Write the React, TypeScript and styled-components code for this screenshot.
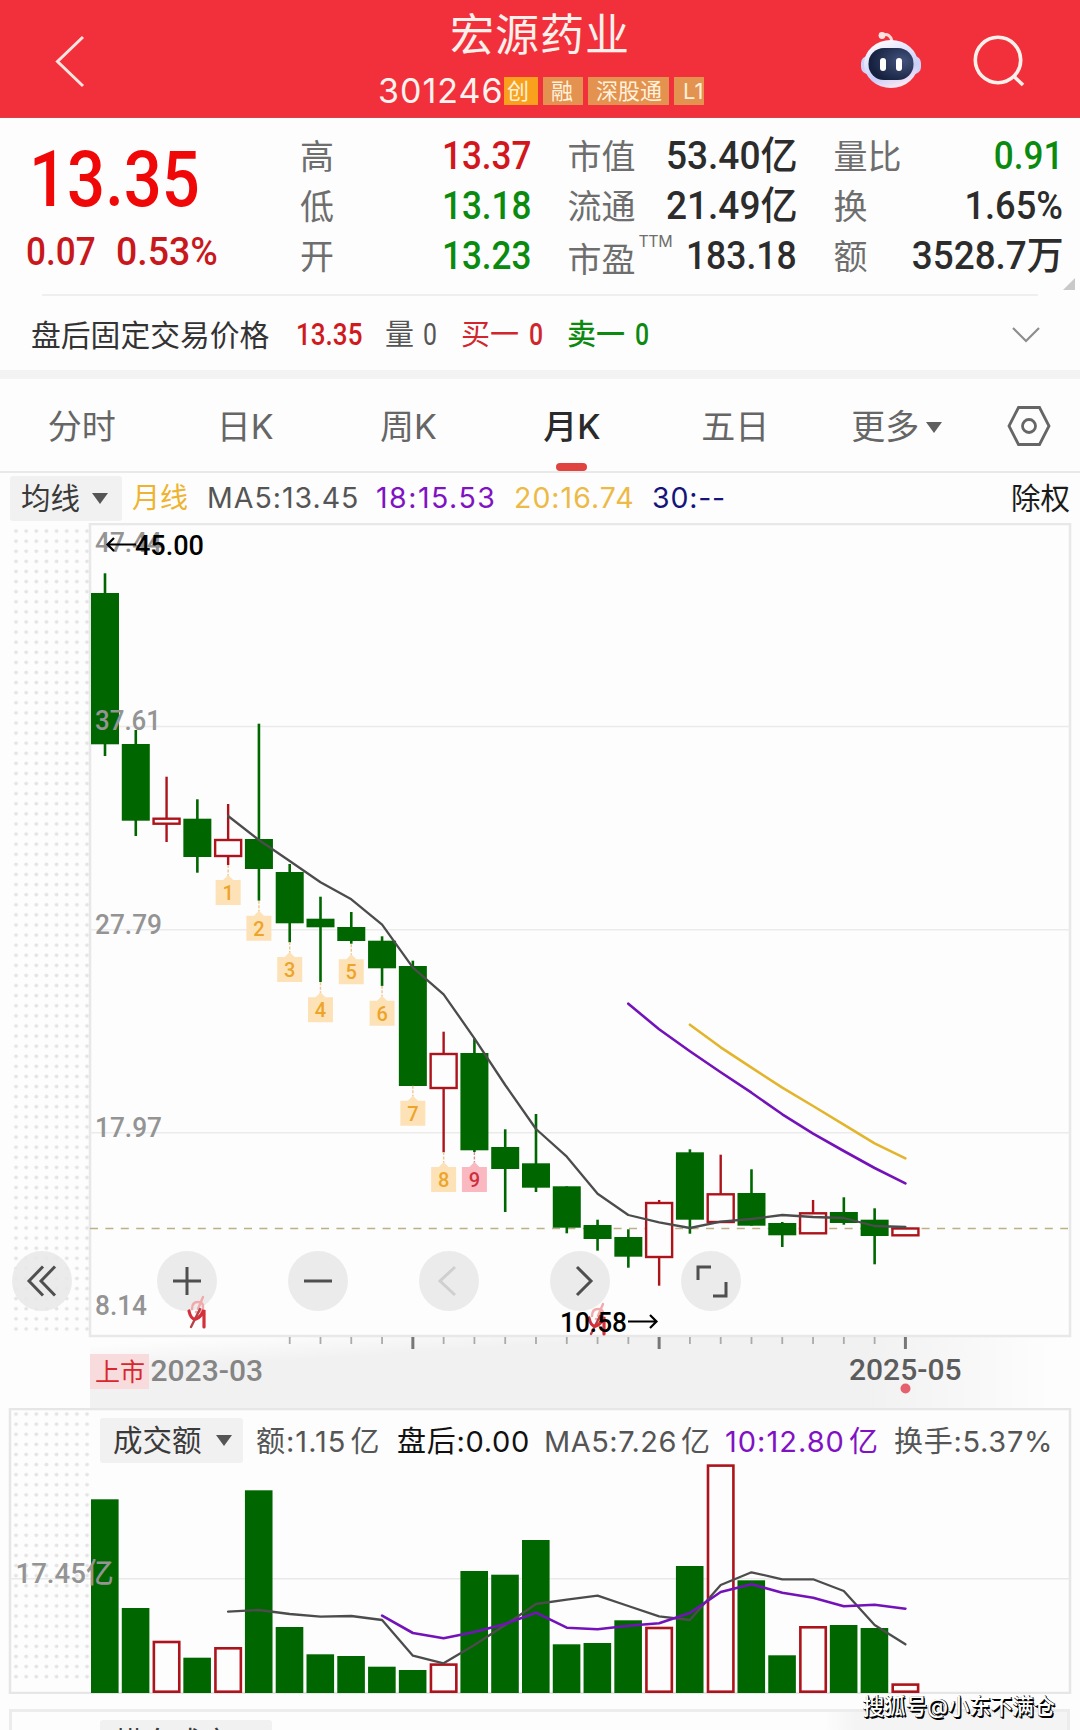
import React from "react";
import styled, { createGlobalStyle } from "styled-components";

const DIN = `Roboto, "Noto Sans CJK SC", sans-serif`;
const UI = `Inter, "Noto Sans CJK SC", sans-serif`;
const GREEN = "#006600";
const RED = "#ad131b";

const Global = createGlobalStyle`
  * { box-sizing: border-box; }
  body { margin: 0; background: #fdfdfd; font-family: ${UI}; color: #333; }
`;

const Page = styled.div`
  width: 1080px;
  height: 1730px;
  overflow: hidden;
  background: #fdfdfd;
  display: flex;
  flex-direction: column;
  white-space: nowrap;
`;

/* ---------- shared text pieces ---------- */
const Num = styled.span<{ $s: number; $k?: number; $c?: string; $o?: string; $b?: number }>`
  display: inline-block;
  flex: none;
  font: ${(p) => p.$b ?? 500} ${(p) => p.$s}px/1 ${DIN};
  color: ${(p) => p.$c ?? "#2c2c2c"};
  transform: scaleX(${(p) => p.$k ?? 0.9});
  transform-origin: ${(p) => p.$o ?? "left"} center;
`;

const Slot = styled.div<{ $w: number; $s?: number; $c?: string; $b?: number; $ls?: number; $in?: number }>`
  flex: none;
  width: ${(p) => p.$w}px;
  height: 44px;
  padding-left: ${(p) => p.$in ?? 0}px;
  font-size: ${(p) => p.$s ?? 29}px;
  line-height: 44px;
  font-weight: ${(p) => p.$b ?? 400};
  letter-spacing: ${(p) => p.$ls ?? 0}px;
  color: ${(p) => p.$c ?? "#555"};
`;
const Unit = styled.span`
  margin-left: 4px;
`;

/* ---------- header ---------- */
const Header = styled.header`
  flex: none;
  height: 118px;
  background: #f1303b;
  border-bottom: 1px solid #d9444c;
  display: grid;
  grid-template-columns: 378px 326px 1fr;
`;
const BackBox = styled.div`
  padding: 34px 0 0 52px;
`;
const TitleBox = styled.div`
  display: flex;
  flex-direction: column;
`;
const Title = styled.h1`
  margin: 5px 0 0 72px;
  font-size: 44px;
  line-height: 60px;
  letter-spacing: 1px;
  font-weight: 400;
  color: #fff0ec;
`;
const CodeRow = styled.div`
  display: flex;
  align-items: center;
  height: 28px;
  margin-top: 12px;
  overflow: hidden;
`;
const Code = styled.span`
  flex: none;
  width: 126px;
  font-size: 34px;
  line-height: 28px;
  letter-spacing: 1px;
  color: #fff3ef;
`;
const Tag = styled.span<{ $w: number; $bg?: string; $pad?: number }>`
  flex: none;
  width: ${(p) => p.$w}px;
  height: 28px;
  margin-right: 5px;
  padding-left: ${(p) => p.$pad ?? 8}px;
  background: ${(p) => p.$bg ?? "#e4924f"};
  color: #fff1dc;
  font-size: 22px;
  line-height: 28px;
`;
const HeadIcons = styled.div`
  display: flex;
  padding: 30px 0 0 156px;
  gap: 44px;
`;

/* ---------- quote ---------- */
const Quote = styled.section`
  flex: none;
  height: 178px;
  display: flex;
  position: relative;
`;
const PriceBox = styled.div`
  width: 300px;
  padding-top: 22px;
`;
const BigPrice = styled.div`
  height: 80px;
  display: flex;
  align-items: center;
  padding-left: 29px;
`;
const Change = styled.div`
  height: 40px;
  margin-top: 12px;
  display: flex;
  align-items: center;
  padding-left: 26px;
`;
const ChangeCell = styled.div`
  width: 90px;
`;
const Stats = styled.div`
  padding-top: 14px;
  display: grid;
  grid-template-columns: 231px 229.5px 230px;
  grid-auto-rows: 50.2px;
  column-gap: 36.5px;
`;
const Stat = styled.div`
  display: flex;
  align-items: center;
  justify-content: space-between;
`;
const StatLabel = styled.div<{ $drop?: boolean }>`
  display: flex;
  font-size: 34px;
  line-height: 50px;
  color: #6e6e6e;
  font-weight: 400;
  padding-top: ${(p) => (p.$drop ? 5 : 0)}px;
`;
const Sup = styled.sup`
  font-size: 16px;
  line-height: 16px;
  margin: -2px 0 0 3px;
  letter-spacing: -0.5px;
`;
const Lift = styled.div`
  padding-bottom: 2px;
  line-height: 1;
`;
const Corner = styled.i`
  position: absolute;
  right: 5px;
  top: 160px;
  border-left: 12px solid transparent;
  border-bottom: 12px solid #c9c9c9;
`;

/* ---------- after hours ---------- */
const AfterHours = styled.section`
  flex: none;
  height: 74px;
  display: flex;
  align-items: center;
  padding-left: 31px;
  padding-top: 3px;
`;
const Rule = styled.hr`
  flex: none;
  width: 996px;
  height: 2px;
  margin: -2px 42px 0;
  border: 0;
  background: #efefef;
`;
const Band = styled.div`
  flex: none;
  height: 9px;
  background: #f3f3f3;
`;

/* ---------- tabs ---------- */
const Tabs = styled.nav`
  flex: none;
  height: 94px;
  display: flex;
  border-bottom: 2px solid #e9e9e9;
`;
const Tab = styled.div<{ $on?: boolean }>`
  width: 163.4px;
  display: flex;
  flex-direction: column;
  align-items: center;
  padding-top: 22px;
  font-size: 34px;
  line-height: 52px;
  font-weight: ${(p) => (p.$on ? 500 : 400)};
  color: ${(p) => (p.$on ? "#2a2a2a" : "#666")};
  &::after {
    content: "";
    display: ${(p) => (p.$on ? "block" : "none")};
    width: 31px;
    height: 8px;
    margin-top: 10px;
    border-radius: 4px;
    background: #df4440;
    margin-right: 1px;
  }
`;
const TabInner = styled.span`
  display: flex;
  align-items: center;
  gap: 7px;
  margin-left: -4px;
`;
const Caret = styled.i<{ $c?: string }>`
  display: inline-block;
  border: 8px solid transparent;
  border-top: 11px solid ${(p) => p.$c ?? "#5f5f5f"};
  border-bottom: 0;
`;
const Gear = styled.svg`
  margin: 26px 0 0 27px;
`;

/* ---------- moving averages ---------- */
const MaRow = styled.div`
  flex: none;
  height: 50px;
  display: flex;
  align-items: center;
  padding-left: 10px;
`;
const Picker = styled.div<{ $w: number; $h: number; $pad: number; $gap: number }>`
  flex: none;
  display: flex;
  align-items: center;
  width: ${(p) => p.$w}px;
  height: ${(p) => p.$h}px;
  padding-left: ${(p) => p.$pad}px;
  gap: ${(p) => p.$gap}px;
  background: #f1f1f1;
  border-radius: 3px;
  font-size: 29.5px;
  line-height: 45px;
  color: #3a3a3a;
`;

/* ---------- chart ---------- */
const ChartArea = styled.section`
  flex: none;
  height: 885px;
  position: relative;
`;
const Controls = styled.div`
  position: absolute;
  left: 12px;
  top: 728px;
  display: flex;
`;
const Round = styled.button<{ $mr: number }>`
  flex: none;
  width: 60px;
  height: 60px;
  margin: 0 ${(p) => p.$mr}px 0 0;
  padding: 0;
  border: 0;
  border-radius: 50%;
  background: rgba(232, 232, 232, 0.88);
`;
const Svg = styled.svg`
  display: block;
`;
const Overlay = styled.svg`
  position: absolute;
  left: 0;
  top: 0;
  pointer-events: none;
`;

/* ---------- volume ---------- */
const Volume = styled.section`
  flex: none;
  height: 286px;
  position: relative;
`;
const Legend = styled.div`
  position: absolute;
  left: 100px;
  top: 10px;
  height: 45px;
  display: flex;
  align-items: center;
  ${Slot} {
    margin-top: 3px;
  }
`;
const NextPanel = styled.section`
  flex: none;
  height: 60px;
  margin: 15px 10px 0 9px;
  border: 3px solid #ececec;
  display: flex;
  background: linear-gradient(90deg, transparent 77%, #f4f4f4 80%);
  padding: 8px 0 0 88px;
`;
const Watermark = styled.div`
  position: absolute;
  right: 25px;
  top: 285px;
  font-size: 21.4px;
  line-height: 26px;
  font-weight: 500;
  color: #fff;
  text-shadow: 1.5px 1.5px 0 #000, 1px 0 0 #000, 0 1px 0 #222;
`;

/* ---------- data ---------- */
const X0 = 105;
const STEP = 30.785;
const cx = (i: number) => X0 + i * STEP;

/* direction, high, body top, body bottom, low */
type Candle = [number, number, number, number, number];
const candles: Candle[] = [
  [0, 573.3, 593, 744.3, 756], [0, 730, 744, 820.7, 836], [1, 776.7, 817.7, 823.7, 842],
  [0, 799.3, 818.7, 857, 872.7], [1, 804, 839, 856, 865], [0, 723.7, 839, 869, 900.7],
  [0, 864, 872, 923.3, 942.3], [0, 896.7, 918.7, 927.3, 982], [0, 912, 927, 941, 943.7],
  [0, 936.3, 940.7, 968.3, 986], [0, 960.7, 966, 1086, 1086], [1, 1031.7, 1053, 1088, 1152.3],
  [0, 1038.3, 1053, 1150.3, 1152], [0, 1129.3, 1147, 1169, 1212], [0, 1114, 1163.3, 1187.7, 1192],
  [0, 1186.3, 1186.3, 1227.7, 1233.3], [0, 1219.7, 1225, 1239, 1250.7], [0, 1229.3, 1237, 1256.7, 1267.7],
  [1, 1200, 1202, 1257, 1285.7], [0, 1149.3, 1152.3, 1219.7, 1233.7], [1, 1154.7, 1193.3, 1222, 1222],
  [0, 1169.3, 1193, 1225.7, 1225.7], [0, 1222, 1223, 1235.3, 1247], [1, 1200, 1212.3, 1233.3, 1233.3],
  [0, 1197.3, 1212, 1223, 1224.7], [0, 1208.3, 1219.7, 1236, 1264.3], [1, 1228, 1227.5, 1235.3, 1235],
];
const ma5 = [816, 840, 861, 882.3, 899.3, 924.7, 967.7, 994.3, 1038.3, 1085, 1129, 1156.7, 1193.7, 1215, 1222.3, 1228, 1221.7, 1219, 1215, 1217, 1218, 1226, 1227];
const ma18 = [1003.7, 1029.3, 1051.3, 1072.3, 1092.7, 1114.3, 1133.7, 1151, 1168, 1183.3];
const ma20 = [1024.7, 1047.3, 1067.7, 1087.7, 1106, 1124.7, 1143.3, 1158.3];
const marks = [880, 915.7, 957, 997.3, 959.3, 1000.7, 1100.7, 1167, 1167];
const grid: [string, number, number, number][] = [
  ["47.44", 0, 552, 67], ["37.61", 726.5, 730, 66], ["27.79", 929.7, 933.5, 67], ["17.97", 1132.7, 1137, 67], ["8.14", 0, 1315, 52],
];
const bars = [1499.3, 1608, 1640.7, 1657.7, 1647, 1490.3, 1627, 1654.3, 1656, 1666.7, 1670, 1663.3, 1571, 1574.7, 1540, 1644.3, 1643, 1620.3, 1626.7, 1566, 1464.3, 1580.3, 1655.3, 1626, 1625, 1628, 1683.3];
const vma5 = [1611.7, 1610, 1614, 1616.7, 1616, 1620, 1655.7, 1663.3, 1645, 1625, 1604, 1599.7, 1595.7, 1606, 1616.3, 1620, 1585, 1572.3, 1579.3, 1579.3, 1591, 1625, 1644.3];
const vma10 = [1615.7, 1633, 1638.3, 1632, 1624, 1612.7, 1627.7, 1629.3, 1625.7, 1623.3, 1613, 1592, 1584.3, 1592.7, 1597.7, 1606.3, 1604.7, 1608.7];

const Line = ({ from, ys, color, w = 2.3 }: { from: number; ys: number[]; color: string; w?: number }) => (
  <polyline
    points={ys.map((y, i) => `${cx(from + i).toFixed(1)},${y}`).join(" ")}
    fill="none" stroke={color} strokeWidth={w} strokeLinecap="round" strokeLinejoin="round"
  />
);

const Dots = ({ id, y }: { id: string; y: number }) => (
  <defs>
    <pattern id={id} x="11" y={y} width="10.15" height="10.1" patternUnits="userSpaceOnUse">
      <circle cx="5" cy="5" r="1.9" fill="#e4e4e4" />
    </pattern>
  </defs>
);

const DinText = ({ x, y, w, size = 28.5, fill = "#949494", weight = 500, children }: {
  x: number; y: number; w: number; size?: number; fill?: string; weight?: number; children: string;
}) => (
  <text x={x} y={y} fontFamily={DIN} fontSize={size} fontWeight={weight} fill={fill}
    textLength={w} lengthAdjust="spacingAndGlyphs">{children}</text>
);

const Squiggle = ({ x, y }: { x: number; y: number }) => (
  <g transform={`translate(${x} ${y})`} fill="none" strokeLinecap="round">
    <path d="M15 0 L10 12 M4 12 q0 -7 6 -7 q6 0 5 6 q-2 5 -7 4" stroke="#f2a9ac" strokeWidth="2.4" />
    <path d="M12 12 L3 30" stroke="#b5434a" strokeWidth="2.4" />
    <path d="M1 14 q2 9 7 8 q5 -2 8 -9 V30" stroke="#d4303a" strokeWidth="3.2" />
  </g>
);

const PriceChart = () => (
  <Svg width="1080" height="885" viewBox="0 523 1080 885">
    <Dots id="dotsA" y={526} />
    <defs>
      <linearGradient id="axisX" x1="0" x2="1" y1="0" y2="0">
        <stop offset="0.78" stopColor="#fdfdfd" stopOpacity="0" />
        <stop offset="0.97" stopColor="#fdfdfd" />
      </linearGradient>
      <linearGradient id="axisY" gradientUnits="userSpaceOnUse" x1="300" y1="1332" x2="301.8" y2="1360">
        <stop offset="0" stopColor="#fdfdfd" />
        <stop offset="1" stopColor="#fdfdfd" stopOpacity="0" />
      </linearGradient>
    </defs>
    <rect x="11" y="526" width="79" height="807" fill="url(#dotsA)" />
    <rect x="90" y="1336" width="990" height="72" fill="#f1f1f1" />
    <rect x="90" y="1336" width="600" height="72" fill="url(#axisY)" />
    <rect x="90" y="1336" width="990" height="72" fill="url(#axisX)" />
    <rect x="90" y="524" width="980" height="812" fill="#fdfdfd" stroke="#e8e8e8" strokeWidth="2.5" />
    {grid.map(([t, gy]) => gy > 0 && <line key={t} x1="90" x2="1070" y1={gy} y2={gy} stroke="#ebebeb" strokeWidth="1.6" />)}
    <line x1="90" x2="1068" y1="1228.5" y2="1228.5" stroke="#bdb088" strokeWidth="1.6" strokeDasharray="8 7.4" />
    {candles.map(([up, h, t, b, l], i) =>
      up ? (
        <g key={i} stroke={RED} strokeWidth="2.4" fill="#fdfdfd">
          <line x1={cx(i)} x2={cx(i)} y1={h} y2={l} />
          <rect x={cx(i) - 13} y={t + 1} width="26" height={b - t - 1} />
        </g>
      ) : (
        <g key={i} fill={GREEN}>
          <rect x={cx(i) - 1.3} y={h} width="2.6" height={l - h} />
          <rect x={cx(i) - 14} y={t} width="28" height={b - t} />
        </g>
      ),
    )}
    {marks.map((y, i) => {
      const x = cx(i + 4);
      const hot = i === 8;
      return (
        <g key={i}>
          <line x1={x} x2={x} y1={y - 15} y2={y - 4} stroke={hot ? "#c9959b" : "#ecc68e"} strokeWidth="1.4" strokeDasharray="3 1.5" />
          <path d={`M${x - 12.5} ${y} H${x - 5} L${x} ${y - 5} L${x + 5} ${y} H${x + 12.5} V${y + 25} H${x - 12.5} Z`} fill={hot ? "#fab9c1" : "#fde2b8"} />
          <text x={x} y={y + 20} textAnchor="middle" fontFamily={DIN} fontSize="20" fill={hot ? "#cf2f3c" : "#eda429"} fontWeight="500">{i + 1}</text>
        </g>
      );
    })}
    <Line from={4} ys={ma5} color="#4c4c4c" />
    <Line from={17} ys={ma18} color="#7412ba" w={2.6} />
    <Line from={19} ys={ma20} color="#e3b52c" w={2.6} />
    {grid.map(([t, , y, w]) => <DinText key={t} x={95} y={y} w={w}>{t}</DinText>)}
    <g fill="none" stroke="#000" strokeWidth="2.2">
      <path d="M136 544.5 H108 M114 538 L107.5 544.5 L114 551" />
      <path d="M628 1321.5 H656 M650 1315 L656.5 1321.5 L650 1328" />
    </g>
    <DinText x={135} y={555} w={69} fill="#000">45.00</DinText>
    {candles.map((_, i) => {
      if (i < 6) return null;
      const major = i === 10 || i === 18 || i === 26;
      return <line key={i} x1={cx(i)} x2={cx(i)} y1="1337" y2={major ? 1349 : 1344} stroke={major ? "#777" : "#aaa"} strokeWidth={major ? 3 : 1.8} />;
    })}
    <rect x="90" y="1354" width="59" height="35" fill="#f8dcdd" />
    <text x="95" y="1381" fontFamily={UI} fontSize="25" fill="#d9262e">上市</text>
    <DinText x={150.500} y={1381} w={112.5} size={29.5} fill="#858585">2023-03</DinText>
    <DinText x={849} y={1380} w={112.5} size={29.5} fill="#5c5c5c">2025-05</DinText>
    <circle cx="905.5" cy="1388.5" r="5" fill="#e5606c" />
  </Svg>
);

const VolumeChart = () => (
  <Svg width="1080" height="286" viewBox="0 1408 1080 286">
    <Dots id="dotsB" y={1409} />
    <rect x="10" y="1409" width="1060" height="284" fill="#fdfdfd" stroke="#e6e6e6" strokeWidth="2.5" />
    <rect x="11" y="1410" width="79" height="272" fill="url(#dotsB)" />
    <line x1="10" x2="1070" y1="1578.7" y2="1578.7" stroke="#e9e9e9" strokeWidth="1.6" />
    {bars.map((y, i) =>
      candles[i][0] ? (
        <rect key={i} x={cx(i) - 12.7} y={y + 1.3} width="25.4" height={1691.7 - y - 1.3} fill="#fdfdfd" stroke={RED} strokeWidth="2.6" />
      ) : (
        <rect key={i} x={cx(i) - 14} y={y} width="27.6" height={1693 - y} fill={GREEN} />
      ),
    )}
    <Line from={4} ys={vma5} color="#4c4c4c" />
    <Line from={9} ys={vma10} color="#7412ba" w={2.6} />
    <DinText x={15.5} y={1583} w={98}>17.45亿</DinText>
  </Svg>
);

const Icon = ({ d, faint }: { d: string; faint?: boolean }) => (
  <Svg width="60" height="60" viewBox="0 0 60 60" fill="none" stroke={faint ? "#cfcfcf" : "#4f4f4f"} strokeWidth="3">
    <path d={d} />
  </Svg>
);

const controls: { mr: number; d: string; faint?: boolean }[] = [
  { mr: 85, d: "M31 15.5 L17 30 L31 44.5 M43 15.5 L29 30 L43 44.5" },
  { mr: 71, d: "M16 30 H44 M30 16 V44" },
  { mr: 71, d: "M16 30 H44" },
  { mr: 71, d: "M36 16 L21 30 L36 44", faint: true },
  { mr: 71, d: "M27 16 L41 30 L27 44" },
  { mr: 0, d: "M17 29 V16 H30 M45 31 V45 H32" },
];

const Robot = () => (
  <Svg width="62" height="60" viewBox="0 0 62 60">
    <defs>
      <linearGradient id="shell" x1="0.2" x2="0.6" y1="0" y2="1">
        <stop offset="0" stopColor="#fff" />
        <stop offset="0.7" stopColor="#c9cdf8" />
        <stop offset="1" stopColor="#fbe9f2" />
      </linearGradient>
      <radialGradient id="visor" cx="0.75" cy="0.4" r="0.7">
        <stop offset="0" stopColor="#44527c" />
        <stop offset="1" stopColor="#16213f" />
      </radialGradient>
    </defs>
    <path d="M23 5 Q30 3 32 11" fill="none" stroke="#ffd9d9" strokeWidth="3" />
    <circle cx="22" cy="5.5" r="3.4" fill="#ffe3e3" />
    <rect x="1" y="26" width="60" height="18" rx="7" fill="#cdd3f8" />
    <ellipse cx="31" cy="34" rx="27" ry="24" fill="url(#shell)" />
    <rect x="8.5" y="18" width="45" height="32" rx="15.5" fill="url(#visor)" />
    <rect x="20" y="28" width="6" height="13" rx="3" fill="#fff" />
    <rect x="36" y="28" width="6" height="13" rx="3" fill="#fff" />
  </Svg>
);

type StatRow = { label: string; sup?: string; value: string; k: number; c?: string };
const stats: StatRow[] = [
  { label: "高", value: "13.37", k: 0.9, c: "#d2161c" },
  { label: "市值", value: "53.40亿", k: 0.95 },
  { label: "量比", value: "0.91", k: 0.9, c: "#0a8a0e" },
  { label: "低", value: "13.18", k: 0.9, c: "#0a8a0e" },
  { label: "流通", value: "21.49亿", k: 0.95 },
  { label: "换", value: "1.65%", k: 0.93 },
  { label: "开", value: "13.23", k: 0.9, c: "#0a8a0e" },
  { label: "市盈", sup: "TTM", value: "183.18", k: 0.91 },
  { label: "额", value: "3528.7万", k: 0.945 },
];

export default function App() {
  return (
    <Page>
      <Global />
      <Header>
        <BackBox>
          <Svg width="34" height="56" viewBox="0 0 34 56" fill="none" stroke="#ffe4e0" strokeWidth="3">
            <path d="M31 3 L5.500 27.500 L31 52" />
          </Svg>
        </BackBox>
        <TitleBox>
          <Title>宏源药业</Title>
          <CodeRow>
            <Code>301246</Code>
            <Tag $w={34} $bg="#f9a11d" $pad={3}>创</Tag>
            <Tag $w={40}>融</Tag>
            <Tag $w={81}>深股通</Tag>
            <Tag $w={40} $pad={9}>L1</Tag>
          </CodeRow>
        </TitleBox>
        <HeadIcons>
          <Robot />
          <Svg width="60" height="60" viewBox="0 0 60 60" fill="none" stroke="#fff0ec" strokeWidth="3.6">
            <circle cx="32" cy="30" r="22.700" />
            <path d="M47.500 46 L57 55" />
          </Svg>
        </HeadIcons>
      </Header>

      <Quote>
        <PriceBox>
          <BigPrice><Num $s={77} $k={0.87} $c="#f00808">13.35</Num></BigPrice>
          <Change>
            <ChangeCell><Num $s={39} $k={0.9} $c="#c9181c">0.07</Num></ChangeCell>
            <Num $s={39} $k={0.96} $c="#c9181c">0.53%</Num>
          </Change>
        </PriceBox>
        <Stats>
          {stats.map((s) => (
            <Stat key={s.label}>
              <StatLabel $drop={!!s.sup}>{s.label}{s.sup && <Sup>{s.sup}</Sup>}</StatLabel>
              <Lift><Num $s={39} $k={s.k} $c={s.c} $o="right">{s.value}</Num></Lift>
            </Stat>
          ))}
        </Stats>
        <Corner />
      </Quote>
      <Rule />

      <AfterHours>
        <Slot $w={265} $s={29.8} $c="#333">盘后固定交易价格</Slot>
        <Slot $w={89}><Num $s={31} $k={0.84} $c="#cf1a1e">13.35</Num></Slot>
        <Slot $w={38}>量</Slot>
        <Slot $w={38}><Num $s={31} $k={0.8} $b={400} $c="#555">0</Num></Slot>
        <Slot $w={68} $c="#d0262c">买一</Slot>
        <Slot $w={38}><Num $s={31} $k={0.8} $c="#d0262c">0</Num></Slot>
        <Slot $w={68} $c="#0c8a10" $b={500}>卖一</Slot>
        <Slot $w={376}><Num $s={31} $k={0.8} $c="#0c8a10">0</Num></Slot>
        <Svg width="30" height="20" viewBox="0 0 30 20" fill="none" stroke="#8d8d8d" strokeWidth="2.2">
          <path d="M2 3 L15 16 L28 3" />
        </Svg>
      </AfterHours>
      <Band />

      <Tabs>
        <Tab>分时</Tab>
        <Tab>日K</Tab>
        <Tab>周K</Tab>
        <Tab $on>月K</Tab>
        <Tab>五日</Tab>
        <Tab><TabInner>更多<Caret /></TabInner></Tab>
        <Gear width="44" height="42" viewBox="0 0 44 42" fill="none" stroke="#666" strokeWidth="2.8">
          <path d="M11.500 2.500 H32.500 L42 21 L32.500 39.500 H11.500 L2 21 Z" />
          <circle cx="22" cy="21" r="6.500" />
        </Gear>
      </Tabs>

      <MaRow>
        <Picker $w={112} $h={45} $pad={11} $gap={12}>均线<Caret $c="#555" /></Picker>
        <Slot $w={85} $s={28} $c="#eeb32f" $in={10}>月线</Slot>
        <Slot $w={169} $s={28.5} $ls={1}>MA5:13.45</Slot>
        <Slot $w={138} $s={28.5} $ls={1.5} $c="#8012c4">18:15.53</Slot>
        <Slot $w={138} $s={28.5} $ls={1} $c="#ecba45">20:16.74</Slot>
        <Slot $w={359} $s={28.5} $ls={0.8} $c="#14147a">30:--</Slot>
        <Slot $w={62} $s={29.5} $c="#1c1c1c">除权</Slot>
      </MaRow>

      <ChartArea>
        <PriceChart />
        <Controls>
          {controls.map((c, i) => (
            <Round key={i} $mr={c.mr}><Icon d={c.d} faint={c.faint} /></Round>
          ))}
        </Controls>
        <Overlay width="1080" height="885" viewBox="0 523 1080 885">
          <Squiggle x={188} y={1297} />
          <Squiggle x={588} y={1304} />
          <DinText x={560} y={1332} w={67} fill="#000">10.58</DinText>
        </Overlay>
      </ChartArea>

      <Volume>
        <VolumeChart />
        <Legend>
          <Picker $w={143} $h={45} $pad={13} $gap={14}>成交额<Caret $c="#555" /></Picker>
          <Slot $w={154} $in={13} $ls={1}>额:1.15<Unit>亿</Unit></Slot>
          <Slot $w={147} $c="#111" $ls={0.7}>盘后:0.00</Slot>
          <Slot $w={181} $ls={0.5}>MA5:7.26<Unit>亿</Unit></Slot>
          <Slot $w={169} $ls={1} $c="#8012c4">10:12.80<Unit>亿</Unit></Slot>
          <Slot $w={170} $ls={0.7}>换手:5.37%</Slot>
        </Legend>
        <Watermark>搜狐号@小东不满仓</Watermark>
      </Volume>

      <NextPanel>
        <Picker $w={172} $h={45} $pad={14} $gap={14}>横向成交</Picker>
      </NextPanel>
    </Page>
  );
}
